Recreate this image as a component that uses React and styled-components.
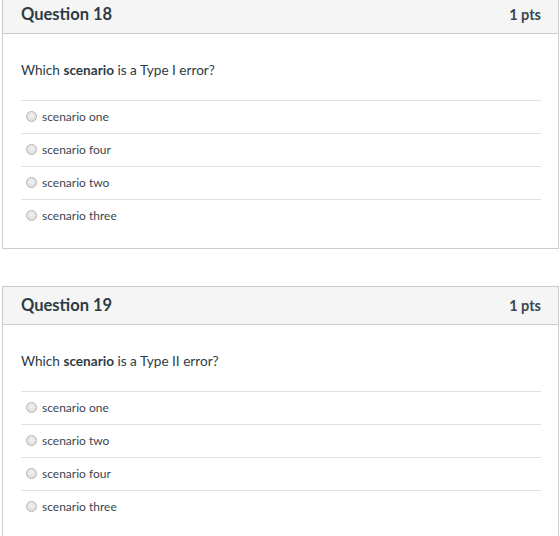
import React from 'react';
import styled, { createGlobalStyle } from 'styled-components';

const GlobalStyle = createGlobalStyle`
  html, body {
    margin: 0;
    padding: 0;
    background: #fff;
  }
  body {
    font-family: Lato, "Open Sans", "Liberation Sans", sans-serif;
    color: #2d3b45;
  }
`;

const Page = styled.div`
  padding: 0 1px 0 2px;
  margin-top: -5px;
`;

const Card = styled.section`
  border: 1px solid #c7cdd1;
  background: #fff;
  margin-bottom: 37px;
`;

const Header = styled.header`
  display: flex;
  align-items: center;
  justify-content: space-between;
  box-sizing: border-box;
  height: 38px;
  padding: 0 17px 1px 18px;
  background: #f5f5f5;
  border-bottom: 1px solid #c7cdd1;
`;

const Title = styled.h2`
  margin: 0;
  font-size: 16.5px;
  font-weight: 700;
  color: #2d3b45;
`;

const Points = styled.span`
  font-size: 14.5px;
  font-weight: 700;
  color: #3b4650;
`;

const Body = styled.div`
  padding: 26px 17px 16px 18px;
`;

const Prompt = styled.p`
  margin: 0 0 20px;
  font-size: 13.6px;
  line-height: 20px;
`;

const Options = styled.ul`
  list-style: none;
  margin: 0;
  padding: 0;
`;

const Option = styled.li`
  display: flex;
  align-items: center;
  box-sizing: border-box;
  height: 33px;
  padding-bottom: 2px;
  border-top: 1px solid #e2e2e2;
  font-size: 12px;
  color: #3b4650;
`;

const Radio = styled.span`
  box-sizing: border-box;
  width: 11px;
  height: 11px;
  margin: 0 5px 0 5px;
  border-radius: 50%;
  border: 1px solid #b4b4b4;
  background: radial-gradient(circle at 50% 40%, #f2f2f2 0%, #d8d8d8 100%);
`;

const questions = [
  {
    title: 'Question 18',
    type: 'I',
    options: ['scenario one', 'scenario four', 'scenario two', 'scenario three'],
  },
  {
    title: 'Question 19',
    type: 'II',
    options: ['scenario one', 'scenario two', 'scenario four', 'scenario three'],
  },
];

export default function App() {
  return (
    <>
      <GlobalStyle />
      <Page>
        {questions.map((q) => (
          <Card key={q.title}>
            <Header>
              <Title>{q.title}</Title>
              <Points>1 pts</Points>
            </Header>
            <Body>
              <Prompt>
                Which <strong>scenario</strong> is a Type {q.type} error?
              </Prompt>
              <Options>
                {q.options.map((o) => (
                  <Option key={o}>
                    <Radio />
                    {o}
                  </Option>
                ))}
              </Options>
            </Body>
          </Card>
        ))}
      </Page>
    </>
  );
}
